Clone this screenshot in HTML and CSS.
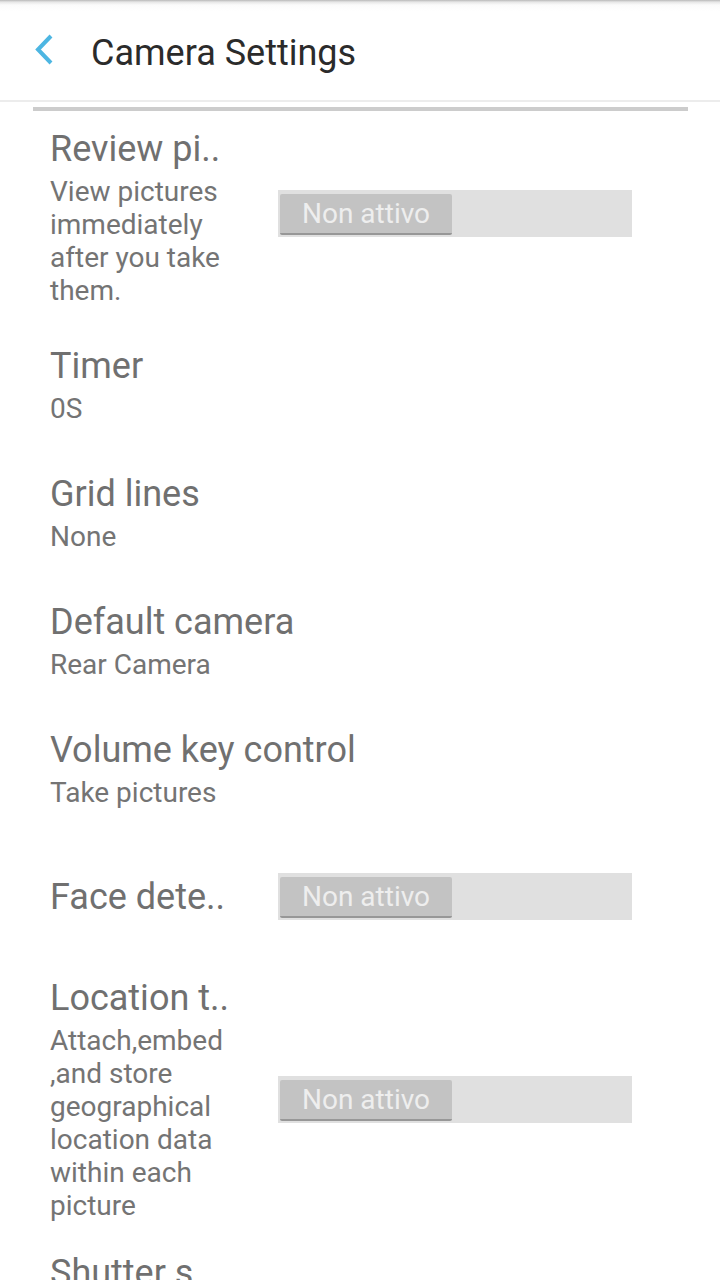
FILE: index.html
```html
<!DOCTYPE html>
<html>
<head>
<meta charset="utf-8">
<link rel="stylesheet" href="styles.css">
</head>
<body>
<div class="screen">
  <header class="appbar">
    <svg class="back" width="20" height="32" viewBox="0 0 20 32">
      <polyline points="16,2 3,15.5 16,29" fill="none" stroke="#4db6e2" stroke-width="4" stroke-linejoin="miter"/>
    </svg>
    <h1 class="appbar-title">Camera Settings</h1>
  </header>
  <div class="sep"></div>
  <div class="list">
    <div class="row row-review">
      <div class="text narrow">
        <div class="title">Review pi..</div>
        <div class="summary">View pictures immediately after you take them.</div>
      </div>
      <div class="toggle toggle-review"><div class="thumb">Non attivo</div></div>
    </div>
    <div class="row">
      <div class="text">
        <div class="title">Timer</div>
        <div class="summary">0S</div>
      </div>
    </div>
    <div class="row">
      <div class="text">
        <div class="title">Grid lines</div>
        <div class="summary">None</div>
      </div>
    </div>
    <div class="row">
      <div class="text">
        <div class="title">Default camera</div>
        <div class="summary">Rear Camera</div>
      </div>
    </div>
    <div class="row">
      <div class="text">
        <div class="title">Volume key control</div>
        <div class="summary">Take pictures</div>
      </div>
    </div>
    <div class="row row-face">
      <div class="text narrow">
        <div class="title">Face dete..</div>
      </div>
      <div class="toggle"><div class="thumb">Non attivo</div></div>
    </div>
    <div class="row row-location">
      <div class="text narrow">
        <div class="title">Location t..</div>
        <div class="summary">Attach,embed ,and store geographical location data within each picture</div>
      </div>
      <div class="toggle"><div class="thumb">Non attivo</div></div>
    </div>
    <div class="row row-shutter">
      <div class="text narrow">
        <div class="title">Shutter s..</div>
      </div>
    </div>
  </div>
</div>
</body>
</html>
```

FILE: styles.css
```css
html, body {
  margin: 0;
  padding: 0;
  background: #ffffff;
}

body {
  font-family: Roboto, "Noto Sans", sans-serif;
}

.screen {
  width: 720px;
  height: 1280px;
  overflow: hidden;
  background: #ffffff;
}

.appbar {
  height: 100px;
  display: flex;
  align-items: center;
  background: linear-gradient(to bottom, #b8b8b8 0px, #e6e6e6 2px, #fbfbfb 5px, #ffffff 12px);
  border-bottom: 2px solid #ececec;
  box-sizing: content-box;
}

.back {
  margin-left: 35px;
  flex: none;
}

.appbar-title {
  margin: 5px 0 0 36px;
  font-size: 36px;
  font-weight: 400;
  color: #2b2b2b;
  line-height: 44px;
}

.sep {
  height: 4px;
  margin: 5px 32px 0 33px;
  background: #cccccc;
}

.list {
  padding-left: 50px;
}

.row {
  display: flex;
  align-items: center;
  padding: 23px 0 24px;
}

.text {
  flex: none;
}

.text.narrow {
  width: 200px;
  margin-right: 28px;
}

.title {
  font-size: 36px;
  line-height: 44px;
  color: #707070;
  white-space: nowrap;
}

.summary {
  margin-top: 4px;
  font-size: 28px;
  line-height: 33px;
  color: #747474;
}

.row-review {
  padding: 16px 0 14px;
}

.row-face {
  padding: 40px 0 28px;
}

.row-location {
  padding: 28px 0 16px;
}

.row-shutter {
  padding: 13px 0 0;
}

.toggle {
  width: 354px;
  height: 47px;
  background: #e0e0e0;
  display: flex;
  align-items: flex-start;
  padding: 4px 0 0 2px;
  box-sizing: border-box;
}

.toggle-review {
  margin-top: -8px;
}

.thumb {
  width: 172px;
  height: 41px;
  box-sizing: border-box;
  background: #c3c3c3;
  border-bottom: 2px solid #979797;
  border-radius: 2px;
  color: #eeeeee;
  font-size: 28px;
  line-height: 40px;
  padding-left: 22px;
}
```
